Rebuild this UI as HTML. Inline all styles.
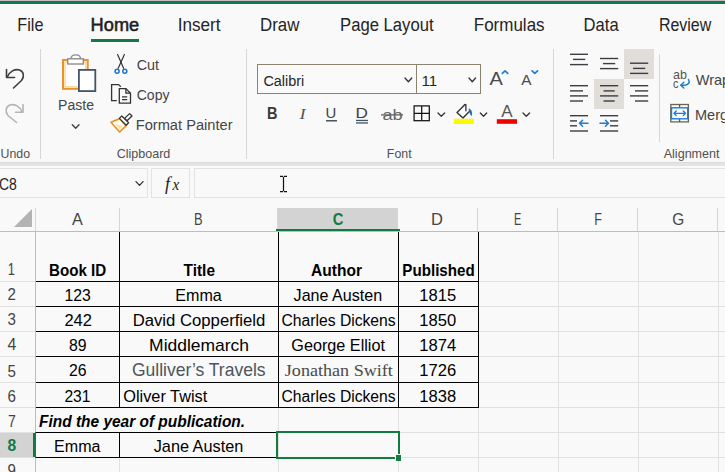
<!DOCTYPE html><html><head><meta charset="utf-8"><style>html,body{margin:0;padding:0;background:#f9f9f9;overflow:hidden;width:725px;height:472px}svg text{white-space:pre}</style></head><body><svg width="725" height="472" viewBox="0 0 725 472" style="display:block"><rect x="0" y="0" width="725" height="472" fill="#f9f9f9"/><rect x="0" y="0" width="725" height="1" fill="#c7bcc3"/>
<rect x="0" y="1" width="725" height="3" fill="#107c41"/>
<rect x="91" y="39" width="48" height="3" fill="#107c41"/>
<rect x="40" y="49" width="1" height="110" fill="#d6d6d6"/>
<rect x="246" y="49" width="1" height="110" fill="#d6d6d6"/>
<rect x="553" y="49" width="1" height="110" fill="#d6d6d6"/>
<rect x="659" y="54" width="1" height="88" fill="#d6d6d6"/>
<rect x="0" y="162" width="725" height="4" fill="#e4e4e4"/>
<rect x="0" y="162" width="725" height="1" fill="#dadada"/>
<rect x="-4.5" y="168.5" width="152" height="29" fill="none" stroke="#e3e3e3" stroke-width="1"/>
<rect x="151.5" y="168.5" width="38" height="29" fill="none" stroke="#e3e3e3" stroke-width="1"/>
<rect x="194.5" y="168.5" width="539" height="29" fill="none" stroke="#e3e3e3" stroke-width="1"/>
<rect x="278" y="208" width="120" height="23" fill="#d3d3d3"/>
<rect x="35" y="208" width="1" height="23" fill="#d6d6d6"/>
<rect x="119" y="208" width="1" height="23" fill="#d6d6d6"/>
<rect x="277" y="208" width="1" height="23" fill="#d6d6d6"/>
<rect x="397" y="208" width="1" height="23" fill="#d6d6d6"/>
<rect x="477" y="208" width="1" height="23" fill="#d6d6d6"/>
<rect x="557" y="208" width="1" height="23" fill="#d6d6d6"/>
<rect x="637" y="208" width="1" height="23" fill="#d6d6d6"/>
<rect x="717" y="208" width="1" height="23" fill="#d6d6d6"/>
<rect x="0" y="231" width="725" height="1" fill="#bdbdbd"/>
<rect x="276" y="229" width="124" height="2" fill="#107c41"/>
<path d="M14 227 L32 227 L32 209 Z" fill="#b3b3b3"/>
<rect x="0" y="432" width="34" height="25" fill="#d3d3d3"/>
<rect x="35" y="232" width="1" height="240" fill="#bdbdbd"/>
<rect x="33" y="432" width="3" height="26" fill="#107c41"/>
<rect x="0" y="281" width="35" height="1" fill="#e0e0e0"/>
<rect x="0" y="306" width="35" height="1" fill="#e0e0e0"/>
<rect x="0" y="331" width="35" height="1" fill="#e0e0e0"/>
<rect x="0" y="356" width="35" height="1" fill="#e0e0e0"/>
<rect x="0" y="382" width="35" height="1" fill="#e0e0e0"/>
<rect x="0" y="407" width="35" height="1" fill="#e0e0e0"/>
<rect x="0" y="432" width="35" height="1" fill="#e0e0e0"/>
<rect x="0" y="457" width="35" height="1" fill="#e0e0e0"/>
<rect x="36" y="281" width="689" height="1" fill="#e0e0e0"/>
<rect x="36" y="306" width="689" height="1" fill="#e0e0e0"/>
<rect x="36" y="331" width="689" height="1" fill="#e0e0e0"/>
<rect x="36" y="356" width="689" height="1" fill="#e0e0e0"/>
<rect x="36" y="382" width="689" height="1" fill="#e0e0e0"/>
<rect x="36" y="407" width="689" height="1" fill="#e0e0e0"/>
<rect x="36" y="432" width="689" height="1" fill="#e0e0e0"/>
<rect x="36" y="457" width="689" height="1" fill="#e0e0e0"/>
<rect x="119" y="232" width="1" height="240" fill="#e0e0e0"/>
<rect x="278" y="232" width="1" height="240" fill="#e0e0e0"/>
<rect x="398" y="232" width="1" height="240" fill="#e0e0e0"/>
<rect x="478" y="232" width="1" height="240" fill="#e0e0e0"/>
<rect x="558" y="232" width="1" height="240" fill="#e0e0e0"/>
<rect x="638" y="232" width="1" height="240" fill="#e0e0e0"/>
<rect x="718" y="232" width="1" height="240" fill="#e0e0e0"/>
<rect x="36" y="281" width="443" height="1" fill="#000000"/>
<rect x="36" y="306" width="443" height="1" fill="#000000"/>
<rect x="36" y="331" width="443" height="1" fill="#000000"/>
<rect x="36" y="356" width="443" height="1" fill="#000000"/>
<rect x="36" y="382" width="443" height="1" fill="#000000"/>
<rect x="36" y="407" width="443" height="1" fill="#000000"/>
<rect x="119" y="232" width="1" height="175" fill="#000000"/>
<rect x="278" y="232" width="1" height="175" fill="#000000"/>
<rect x="398" y="232" width="1" height="175" fill="#000000"/>
<rect x="478" y="232" width="1" height="175" fill="#000000"/>
<rect x="36" y="432" width="243" height="1" fill="#000000"/>
<rect x="36" y="457" width="243" height="1" fill="#000000"/>
<rect x="119" y="432" width="1" height="26" fill="#000000"/>
<rect x="276" y="431" width="124" height="2" fill="#107c41"/>
<rect x="276" y="431" width="2" height="28" fill="#107c41"/>
<rect x="398" y="431" width="2" height="23" fill="#107c41"/>
<rect x="276" y="457" width="119" height="2" fill="#107c41"/>
<rect x="395" y="454" width="7" height="7" fill="#f9f9f9"/>
<rect x="396" y="455" width="5" height="6" fill="#107c41"/>
<g fill="none" stroke="#3c3c3c" stroke-width="1.6" stroke-linecap="round" stroke-linejoin="round"><path d="M6.5 69.5 V77.5 H14.5"/><path d="M7.2 77 C 9.5 71.5, 15 68.5, 19.5 70 C 24 71.5, 24.5 77, 21.5 80.5 L 13.5 88"/></g>
<g fill="none" stroke="#b4b4b4" stroke-width="1.6" stroke-linecap="round" stroke-linejoin="round"><path d="M23 104.5 V112.3 H15.5"/><path d="M22.3 112 C 20 106.5, 14.5 103.5, 10 105 C 5.5 106.5, 5 112, 8 115.5 L 16.5 122.5"/></g>
<rect x="63" y="60" width="24.7" height="28.8" fill="#ffffff" stroke="#e8912d" stroke-width="2"/>
<rect x="65" y="62" width="20.7" height="24.8" fill="none" stroke="#fcd88e" stroke-width="1.4"/>
<path d="M71 58.8 C 71 53.5, 80.5 53.5, 80.5 58.8" fill="#ffffff" stroke="#8c8c8c" stroke-width="1.4"/>
<rect x="67.7" y="58.8" width="15.6" height="5.2" fill="#ffffff" stroke="#8c8c8c" stroke-width="1.4"/>
<rect x="78.9" y="69.9" width="16.4" height="21.2" fill="#ffffff" stroke="#44546a" stroke-width="1.8"/>
<path d="M72.3 124.8 L75.65 128.3 L79 124.8" fill="none" stroke="#404040" stroke-width="1.4" stroke-linecap="round" stroke-linejoin="round"/>
<g stroke="#333" stroke-width="1.2" fill="none" stroke-linecap="round"><path d="M117.6 54.6 L123.6 68.3"/><path d="M124.4 54.6 L118.2 68.3"/></g>
<g stroke="#1a73c8" stroke-width="1.5" fill="none"><circle cx="117.1" cy="71.2" r="2"/><circle cx="124.8" cy="71.2" r="2"/></g>
<g fill="none" stroke="#333" stroke-width="1.3" stroke-linejoin="miter"><path d="M116.8 100.6 H111.6 V84.6 H118.6 L120.8 86.8"/><path d="M119.3 88.6 H125.9 L130.5 93.2 V103.2 H119.3 Z"/><path d="M125.9 88.6 V93.2 H130.5"/><path d="M122 96.8 H127.2 M122 99.6 H127.2"/></g>
<path d="M119.8 118.6 L111 122.3 L119.6 132 L126 125.8 Z" fill="#ffffff" stroke="#e8912d" stroke-width="1.7" stroke-linejoin="round"/>
<path d="M114.5 123.5 L119.5 129.5 L123 126 Z" fill="#fde2a0"/>
<path d="M124.6 118.4 L129.6 113.6 L132 116 L127 120.8 Z" fill="#ffffff" stroke="#333" stroke-width="1.3" stroke-linejoin="round"/>
<path d="M119.4 118.4 L121.8 116 L128.6 122.8 L126.2 125.2 Z" fill="#ffffff" stroke="#333" stroke-width="1.3" stroke-linejoin="round"/>
<rect x="257.5" y="64.5" width="223" height="29" fill="#fafafa" stroke="#8a836f" stroke-width="1"/>
<rect x="416" y="64" width="1" height="30" fill="#8a836f"/>
<path d="M405 78 L408.4 81.8 L411.8 78" fill="none" stroke="#333" stroke-width="1.3" stroke-linecap="round" stroke-linejoin="round"/>
<path d="M469 78 L472.3 81.8 L475.6 78" fill="none" stroke="#333" stroke-width="1.3" stroke-linecap="round" stroke-linejoin="round"/>
<rect x="326" y="120" width="11" height="1.5" fill="#44546a"/>
<rect x="356" y="119.8" width="12" height="1.3" fill="#44546a"/>
<rect x="356" y="122.3" width="12" height="1.3" fill="#44546a"/>
<rect x="381" y="114.3" width="22" height="1.2" fill="#555"/>
<g fill="none" stroke="#111" stroke-width="1.25"><rect x="414.1" y="105.9" width="15.2" height="14.8"/><path d="M421.7 106 V120.6 M414.2 113.3 H429.2"/></g>
<path d="M438 113 L441.3 116.3 L444.6 113" fill="none" stroke="#333" stroke-width="1.3" stroke-linecap="round" stroke-linejoin="round"/>
<path d="M463.8 105.8 L457 112.4 L463 117.9 L469.8 111.1" fill="none" stroke="#333" stroke-width="1.4" stroke-linejoin="round"/>
<path d="M463.6 106.2 Q464.3 104.2 465.9 104.6 V111.2" fill="none" stroke="#333" stroke-width="1.3" stroke-linejoin="round"/>
<path d="M468.6 108.4 C 471.8 109, 472.6 112.5, 471.8 116 C 470 115, 468.8 111.5, 468.6 108.4 Z" fill="#1a73c8"/>
<rect x="453.9" y="118.8" width="20.1" height="5.2" fill="#fbfb00"/>
<path d="M480.3 113 L483.5 116.3 L486.7 113" fill="none" stroke="#333" stroke-width="1.3" stroke-linecap="round" stroke-linejoin="round"/>
<rect x="496.8" y="119.2" width="20.2" height="4.6" fill="#f00000"/>
<path d="M523 113 L526.3 116.3 L529.6 113" fill="none" stroke="#333" stroke-width="1.3" stroke-linecap="round" stroke-linejoin="round"/>
<path d="M502.3 73.4 L505.05 70.8 L507.8 73.4" fill="none" stroke="#1a7cd4" stroke-width="1.6" stroke-linecap="round" stroke-linejoin="round"/>
<path d="M532 70.8 L534.8 73.4 L537.6 70.8" fill="none" stroke="#1a7cd4" stroke-width="1.6" stroke-linecap="round" stroke-linejoin="round"/>
<rect x="624" y="49" width="30" height="30" fill="#e1ddd9"/>
<rect x="594" y="79" width="30" height="30" fill="#e1ddd9"/>
<rect x="570" y="53.60" width="18.00" height="1.4" fill="#3a3f45"/>
<rect x="573" y="58.70" width="12.20" height="1.4" fill="#3a3f45"/>
<rect x="570" y="63.90" width="18.00" height="1.4" fill="#3a3f45"/>
<rect x="600" y="57.80" width="18.20" height="1.4" fill="#3a3f45"/>
<rect x="603" y="62.90" width="12.20" height="1.4" fill="#3a3f45"/>
<rect x="600" y="67.90" width="18.20" height="1.4" fill="#3a3f45"/>
<rect x="630" y="62.50" width="18.20" height="1.4" fill="#3a3f45"/>
<rect x="633" y="67.70" width="12.20" height="1.4" fill="#3a3f45"/>
<rect x="630" y="72.70" width="18.20" height="1.4" fill="#3a3f45"/>
<rect x="570" y="85.00" width="18.00" height="1.4" fill="#3a3f45"/>
<rect x="570" y="90.20" width="13.00" height="1.4" fill="#3a3f45"/>
<rect x="570" y="95.20" width="18.00" height="1.4" fill="#3a3f45"/>
<rect x="570" y="100.30" width="13.00" height="1.4" fill="#3a3f45"/>
<rect x="600" y="85.00" width="18.20" height="1.4" fill="#3a3f45"/>
<rect x="603.5" y="90.20" width="11.20" height="1.4" fill="#3a3f45"/>
<rect x="600" y="95.20" width="18.20" height="1.4" fill="#3a3f45"/>
<rect x="603.5" y="100.30" width="11.20" height="1.4" fill="#3a3f45"/>
<rect x="630" y="85.00" width="18.20" height="1.4" fill="#3a3f45"/>
<rect x="635" y="90.20" width="13.20" height="1.4" fill="#3a3f45"/>
<rect x="630" y="95.20" width="18.20" height="1.4" fill="#3a3f45"/>
<rect x="635" y="100.30" width="13.20" height="1.4" fill="#3a3f45"/>
<rect x="570" y="115.00" width="18.00" height="1.4" fill="#3a3f45"/>
<rect x="570" y="120.20" width="7.00" height="1.4" fill="#3a3f45"/>
<rect x="570" y="125.10" width="7.00" height="1.4" fill="#3a3f45"/>
<rect x="570" y="130.30" width="18.00" height="1.4" fill="#3a3f45"/>
<rect x="600" y="115.00" width="18.20" height="1.4" fill="#3a3f45"/>
<rect x="610" y="120.20" width="8.20" height="1.4" fill="#3a3f45"/>
<rect x="610" y="125.10" width="8.20" height="1.4" fill="#3a3f45"/>
<rect x="600" y="130.30" width="18.20" height="1.4" fill="#3a3f45"/>
<g fill="none" stroke="#1a7cd4" stroke-width="1.5" stroke-linecap="round" stroke-linejoin="round"><path d="M579.5 123.3 H588 M582.5 120.3 L579.5 123.3 L582.5 126.3"/><path d="M600 123.3 H608.5 M605.5 120.3 L608.5 123.3 L605.5 126.3"/></g>
<g fill="none" stroke="#1a7cd4" stroke-width="1.5" stroke-linecap="round" stroke-linejoin="round"><path d="M688.5 79.5 Q691 84 685 85.2 H681"/><path d="M683.8 82.3 L680.8 85.2 L683.8 88"/></g>
<rect x="670.8" y="104.5" width="17.6" height="17.4" fill="#fafafa" stroke="#6a6458" stroke-width="1.3"/>
<path d="M679.6 104.5 V107.5 M679.6 119 V121.9" stroke="#5a5a5a" stroke-width="1.3"/>
<rect x="671.5" y="107.8" width="16.2" height="11" fill="#fafafa" stroke="#1a7cd4" stroke-width="1.4"/>
<g fill="none" stroke="#1a7cd4" stroke-width="1.3" stroke-linecap="round" stroke-linejoin="round"><path d="M674 113.3 H685.5 M676.3 111 L674 113.3 L676.3 115.6 M683.2 111 L685.5 113.3 L683.2 115.6"/></g>
<path d="M136 181.6 L139.5 185.4 L143 181.6" fill="none" stroke="#333" stroke-width="1.3" stroke-linecap="round" stroke-linejoin="round"/>
<g stroke="#111" stroke-width="1.2" fill="none"><path d="M283.5 176.8 V191.2 M280 176.4 H283 M284 176.4 H287 M280 191.6 H283 M284 191.6 H287"/></g>
<rect x="119" y="408" width="1" height="24" fill="#f9f9f9"/><text transform="translate(17.30,31.00) scale(0.9002,1)" font-family="'Liberation Sans'" font-size="18" font-weight="normal" font-style="normal" fill="#242424">File</text>
<text transform="translate(90.59,31.00) scale(1.0127,1)" font-family="'Liberation Sans'" font-size="18" font-weight="normal" font-style="normal" fill="#1f1f1f" stroke="#1f1f1f" stroke-width="0.55">Home</text>
<text transform="translate(177.65,31.00) scale(0.9519,1)" font-family="'Liberation Sans'" font-size="18" font-weight="normal" font-style="normal" fill="#242424">Insert</text>
<text transform="translate(259.96,31.00) scale(0.9380,1)" font-family="'Liberation Sans'" font-size="18" font-weight="normal" font-style="normal" fill="#242424">Draw</text>
<text transform="translate(340.07,31.00) scale(0.9262,1)" font-family="'Liberation Sans'" font-size="18" font-weight="normal" font-style="normal" fill="#242424">Page Layout</text>
<text transform="translate(473.76,31.00) scale(0.9444,1)" font-family="'Liberation Sans'" font-size="18" font-weight="normal" font-style="normal" fill="#242424">Formulas</text>
<text transform="translate(583.58,31.00) scale(0.9234,1)" font-family="'Liberation Sans'" font-size="18" font-weight="normal" font-style="normal" fill="#242424">Data</text>
<text transform="translate(658.91,31.00) scale(0.8878,1)" font-family="'Liberation Sans'" font-size="18" font-weight="normal" font-style="normal" fill="#242424">Review</text>
<text transform="translate(136.70,70.00) scale(0.9895,1)" font-family="'Liberation Sans'" font-size="14.5" font-weight="normal" font-style="normal" fill="#454545">Cut</text>
<text transform="translate(136.70,100.00) scale(0.9711,1)" font-family="'Liberation Sans'" font-size="14.5" font-weight="normal" font-style="normal" fill="#454545">Copy</text>
<text transform="translate(135.69,130.00) scale(1.0109,1)" font-family="'Liberation Sans'" font-size="14.5" font-weight="normal" font-style="normal" fill="#454545">Format Painter</text>
<text transform="translate(58.03,110.00) scale(0.9718,1)" font-family="'Liberation Sans'" font-size="14.5" font-weight="normal" font-style="normal" fill="#454545">Paste</text>
<text transform="translate(0.50,157.70) scale(0.9647,1)" font-family="'Liberation Sans'" font-size="12.8" font-weight="normal" font-style="normal" fill="#505050">Undo</text>
<text transform="translate(116.70,157.50) scale(0.9807,1)" font-family="'Liberation Sans'" font-size="12.8" font-weight="normal" font-style="normal" fill="#505050">Clipboard</text>
<text transform="translate(386.83,157.70) scale(0.9660,1)" font-family="'Liberation Sans'" font-size="12.8" font-weight="normal" font-style="normal" fill="#505050">Font</text>
<text transform="translate(663.70,157.70) scale(0.9817,1)" font-family="'Liberation Sans'" font-size="12.8" font-weight="normal" font-style="normal" fill="#505050">Alignment</text>
<text transform="translate(263.40,85.70) scale(0.9626,1)" font-family="'Liberation Sans'" font-size="15" font-weight="normal" font-style="normal" fill="#262626">Calibri</text>
<text transform="translate(421.39,85.70) scale(1.0120,1)" font-family="'Liberation Sans'" font-size="15" font-weight="normal" font-style="normal" fill="#262626">11</text>
<text transform="translate(695.80,84.80) scale(1.0000,1)" font-family="'Liberation Sans'" font-size="14.5" font-weight="normal" font-style="normal" fill="#454545">Wrap</text>
<text transform="translate(695.00,119.60) scale(1.0000,1)" font-family="'Liberation Sans'" font-size="14.5" font-weight="normal" font-style="normal" fill="#454545">Merg</text>
<text transform="translate(-1.00,189.50) scale(0.8757,1)" font-family="'Liberation Sans'" font-size="16" font-weight="normal" font-style="normal" fill="#262626">C8</text>
<text transform="translate(72.10,225.00) scale(0.9818,1)" font-family="'Liberation Sans'" font-size="16.5" font-weight="normal" font-style="normal" fill="#444444">A</text>
<text transform="translate(194.02,225.00) scale(0.7800,1)" font-family="'Liberation Sans'" font-size="16.5" font-weight="normal" font-style="normal" fill="#444444">B</text>
<text transform="translate(332.70,225.00) scale(0.8917,1)" font-family="'Liberation Sans'" font-size="16.5" font-weight="bold" font-style="normal" fill="#107c41">C</text>
<text transform="translate(431.00,225.00) scale(1.0000,1)" font-family="'Liberation Sans'" font-size="16.5" font-weight="normal" font-style="normal" fill="#444444">D</text>
<text transform="translate(514.04,225.00) scale(0.6600,1)" font-family="'Liberation Sans'" font-size="16.5" font-weight="normal" font-style="normal" fill="#444444">E</text>
<text transform="translate(594.14,225.00) scale(0.7556,1)" font-family="'Liberation Sans'" font-size="16.5" font-weight="normal" font-style="normal" fill="#444444">F</text>
<text transform="translate(672.20,225.00) scale(0.9333,1)" font-family="'Liberation Sans'" font-size="16.5" font-weight="normal" font-style="normal" fill="#444444">G</text>
<text transform="translate(7.70,274.50) scale(0.8000,1)" font-family="'Liberation Sans'" font-size="16" font-weight="normal" font-style="normal" fill="#444444">1</text>
<text transform="translate(7.60,300.00) scale(0.9444,1)" font-family="'Liberation Sans'" font-size="16" font-weight="normal" font-style="normal" fill="#444444">2</text>
<text transform="translate(7.60,324.60) scale(0.9444,1)" font-family="'Liberation Sans'" font-size="16" font-weight="normal" font-style="normal" fill="#444444">3</text>
<text transform="translate(7.60,350.00) scale(0.9889,1)" font-family="'Liberation Sans'" font-size="16" font-weight="normal" font-style="normal" fill="#444444">4</text>
<text transform="translate(7.60,376.60) scale(0.9444,1)" font-family="'Liberation Sans'" font-size="16" font-weight="normal" font-style="normal" fill="#444444">5</text>
<text transform="translate(7.60,401.60) scale(0.9444,1)" font-family="'Liberation Sans'" font-size="16" font-weight="normal" font-style="normal" fill="#444444">6</text>
<text transform="translate(8.10,427.10) scale(0.8778,1)" font-family="'Liberation Sans'" font-size="16" font-weight="normal" font-style="normal" fill="#444444">7</text>
<text transform="translate(7.60,450.70) scale(0.9778,1)" font-family="'Liberation Sans'" font-size="16" font-weight="bold" font-style="normal" fill="#107c41">8</text>
<text transform="translate(7.60,476.00) scale(0.9444,1)" font-family="'Liberation Sans'" font-size="16" font-weight="normal" font-style="normal" fill="#444444">9</text>
<text transform="translate(48.97,275.60) scale(0.9300,1)" font-family="'Liberation Sans'" font-size="16.3" font-weight="bold" font-style="normal" fill="#000000">Book ID</text>
<text transform="translate(183.60,275.60) scale(0.9451,1)" font-family="'Liberation Sans'" font-size="16.3" font-weight="bold" font-style="normal" fill="#000000">Title</text>
<text transform="translate(311.00,275.60) scale(0.9553,1)" font-family="'Liberation Sans'" font-size="16.3" font-weight="bold" font-style="normal" fill="#000000">Author</text>
<text transform="translate(402.37,275.60) scale(0.9294,1)" font-family="'Liberation Sans'" font-size="16.3" font-weight="bold" font-style="normal" fill="#000000">Published</text>
<text transform="translate(64.40,301.00) scale(0.9972,1)" font-family="'Liberation Sans'" font-size="15.8" font-weight="normal" font-style="normal" fill="#000000">123</text>
<text transform="translate(175.28,301.00) scale(1.0189,1)" font-family="'Liberation Sans'" font-size="15.8" font-weight="normal" font-style="normal" fill="#000000">Emma</text>
<text transform="translate(293.60,301.00) scale(1.0191,1)" font-family="'Liberation Sans'" font-size="15.8" font-weight="normal" font-style="normal" fill="#000000">Jane Austen</text>
<text transform="translate(419.25,301.00) scale(1.0507,1)" font-family="'Liberation Sans'" font-size="15.8" font-weight="normal" font-style="normal" fill="#000000">1815</text>
<text transform="translate(64.40,326.00) scale(1.0442,1)" font-family="'Liberation Sans'" font-size="15.8" font-weight="normal" font-style="normal" fill="#000000">242</text>
<text transform="translate(132.64,326.00) scale(1.0575,1)" font-family="'Liberation Sans'" font-size="15.8" font-weight="normal" font-style="normal" fill="#000000">David Copperfield</text>
<text transform="translate(281.50,326.00) scale(0.9930,1)" font-family="'Liberation Sans'" font-size="15.8" font-weight="normal" font-style="normal" fill="#000000">Charles Dickens</text>
<text transform="translate(419.25,326.00) scale(1.0507,1)" font-family="'Liberation Sans'" font-size="15.8" font-weight="normal" font-style="normal" fill="#000000">1850</text>
<text transform="translate(68.90,351.00) scale(1.0008,1)" font-family="'Liberation Sans'" font-size="15.8" font-weight="normal" font-style="normal" fill="#000000">89</text>
<text transform="translate(149.09,351.00) scale(1.1056,1)" font-family="'Liberation Sans'" font-size="15.8" font-weight="normal" font-style="normal" fill="#000000">Middlemarch</text>
<text transform="translate(291.30,351.00) scale(1.0258,1)" font-family="'Liberation Sans'" font-size="15.8" font-weight="normal" font-style="normal" fill="#000000">George Elliot</text>
<text transform="translate(419.25,351.00) scale(1.0507,1)" font-family="'Liberation Sans'" font-size="15.8" font-weight="normal" font-style="normal" fill="#000000">1874</text>
<text transform="translate(68.90,376.30) scale(1.0008,1)" font-family="'Liberation Sans'" font-size="15.8" font-weight="normal" font-style="normal" fill="#000000">26</text>
<text transform="translate(131.90,376.30) scale(1.0013,1)" font-family="'Liberation Sans'" font-size="17.5" font-weight="normal" font-style="normal" fill="#4c5660">Gulliver’s Travels</text>
<text transform="translate(284.80,376.30) scale(1.0350,1)" font-family="'Liberation Serif'" font-size="17.5" font-weight="normal" font-style="normal" fill="#4a4a4a">Jonathan Swift</text>
<text transform="translate(419.25,376.30) scale(1.0507,1)" font-family="'Liberation Sans'" font-size="15.8" font-weight="normal" font-style="normal" fill="#000000">1726</text>
<text transform="translate(64.40,401.50) scale(0.9898,1)" font-family="'Liberation Sans'" font-size="15.8" font-weight="normal" font-style="normal" fill="#000000">231</text>
<text transform="translate(123.20,401.50) scale(1.0349,1)" font-family="'Liberation Sans'" font-size="15.8" font-weight="normal" font-style="normal" fill="#000000">Oliver Twist</text>
<text transform="translate(281.50,401.50) scale(0.9930,1)" font-family="'Liberation Sans'" font-size="15.8" font-weight="normal" font-style="normal" fill="#000000">Charles Dickens</text>
<text transform="translate(419.25,401.50) scale(1.0507,1)" font-family="'Liberation Sans'" font-size="15.8" font-weight="normal" font-style="normal" fill="#000000">1838</text>
<text transform="translate(39.00,427.20) scale(0.9489,1)" font-family="'Liberation Sans'" font-size="16.3" font-weight="bold" font-style="italic" fill="#000000">Find the year of publication.</text>
<text transform="translate(54.08,452.00) scale(1.0166,1)" font-family="'Liberation Sans'" font-size="15.8" font-weight="normal" font-style="normal" fill="#000000">Emma</text>
<text transform="translate(153.70,452.00) scale(1.0306,1)" font-family="'Liberation Sans'" font-size="15.8" font-weight="normal" font-style="normal" fill="#000000">Jane Austen</text>
<text transform="translate(266.99,118.60) scale(0.9100,1)" font-family="'Liberation Sans'" font-size="16" font-weight="bold" font-style="normal" fill="#3a3a3a">B</text>
<text transform="translate(299.49,118.60) scale(1.1857,1)" font-family="'Liberation Serif'" font-size="15.5" font-weight="normal" font-style="italic" fill="#555">I</text>
<text transform="translate(325.53,117.60) scale(1.0667,1)" font-family="'Liberation Sans'" font-size="14" font-weight="normal" font-style="normal" fill="#404040">U</text>
<text transform="translate(355.38,117.60) scale(1.2222,1)" font-family="'Liberation Sans'" font-size="14" font-weight="normal" font-style="normal" fill="#404040">D</text>
<text transform="translate(382.50,119.60) scale(1.1733,1)" font-family="'Liberation Sans'" font-size="15.5" font-weight="normal" font-style="normal" fill="#666666">ab</text>
<text transform="translate(501.20,117.40) scale(1.0636,1)" font-family="'Liberation Sans'" font-size="16" font-weight="normal" font-style="normal" fill="#555">A</text>
<text transform="translate(489.40,84.90) scale(1.0538,1)" font-family="'Liberation Sans'" font-size="19" font-weight="normal" font-style="normal" fill="#4a4a4a">A</text>
<text transform="translate(521.30,84.90) scale(0.9909,1)" font-family="'Liberation Sans'" font-size="15.5" font-weight="normal" font-style="normal" fill="#4a4a4a">A</text>
<text transform="translate(673.10,78.50) scale(1.0458,1)" font-family="'Liberation Sans'" font-size="12" font-weight="normal" font-style="normal" fill="#555">ab</text>
<text transform="translate(673.10,87.90) scale(0.8429,1)" font-family="'Liberation Sans'" font-size="13" font-weight="normal" font-style="normal" fill="#555">c</text>
<text transform="translate(165.00,190.00) scale(1.0000,1)" font-family="'Liberation Serif'" font-size="18" font-weight="normal" font-style="italic" fill="#222">f</text>
<text transform="translate(172.39,189.50) scale(0.8889,1)" font-family="'Liberation Serif'" font-size="17" font-weight="normal" font-style="italic" fill="#222">x</text></svg></body></html>
